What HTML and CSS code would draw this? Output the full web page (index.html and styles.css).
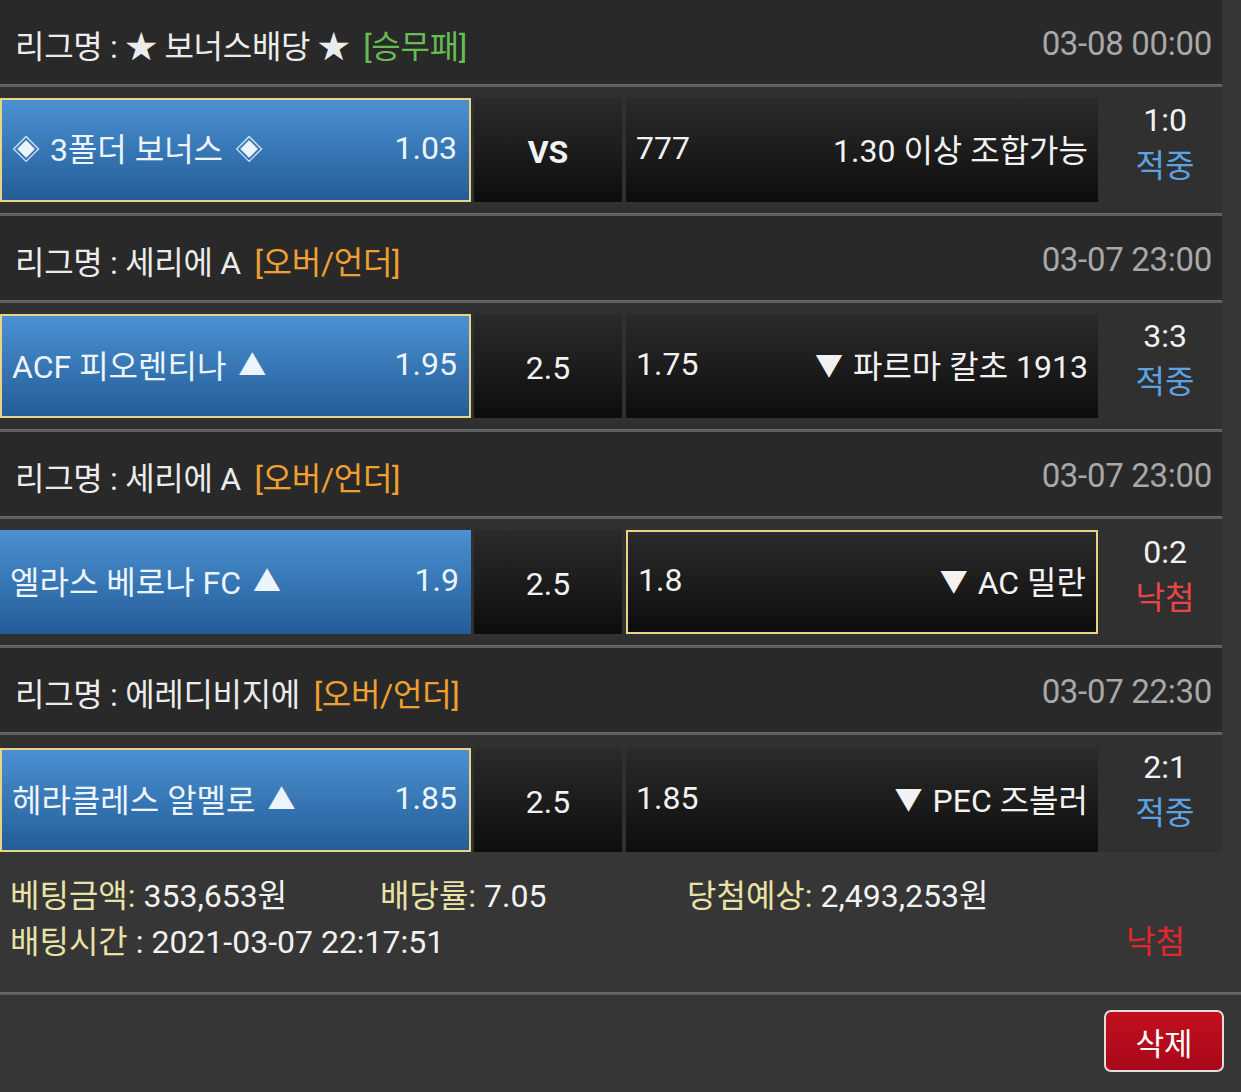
FILE: index.html
```html
<!DOCTYPE html>
<html lang="ko">
<head>
<meta charset="utf-8">
<title>배팅내역</title>
<link rel="stylesheet" href="styles.css">
</head>
<body>
<div class="slip">
  <div class="games">
    <div class="league">
      <span class="league-name">리그명 : ★ 보너스배당 ★ <span class="type green">[승무패]</span></span>
      <span class="date">03-08 00:00</span>
    </div>
    <div class="sep"></div>
    <div class="match">
      <div class="cell home selected"><span><span class="sym first">◈</span> 3폴더 보너스 <span class="sym">◈</span></span><span>1.03</span></div>
      <div class="cell mid bold">VS</div>
      <div class="cell away"><span>777</span><span>1.30 이상 조합가능</span></div>
      <div class="result"><span>1:0</span><span class="hit">적중</span></div>
    </div>
    <div class="sep"></div>

    <div class="league">
      <span class="league-name">리그명 : 세리에 A <span class="type orange">[오버/언더]</span></span>
      <span class="date">03-07 23:00</span>
    </div>
    <div class="sep"></div>
    <div class="match">
      <div class="cell home selected"><span>ACF 피오렌티나 <span class="sym">▲</span></span><span>1.95</span></div>
      <div class="cell mid">2.5</div>
      <div class="cell away"><span>1.75</span><span><span class="sym first">▼</span> 파르마 칼초 1913</span></div>
      <div class="result"><span>3:3</span><span class="hit">적중</span></div>
    </div>
    <div class="sep"></div>

    <div class="league">
      <span class="league-name">리그명 : 세리에 A <span class="type orange">[오버/언더]</span></span>
      <span class="date">03-07 23:00</span>
    </div>
    <div class="sep"></div>
    <div class="match">
      <div class="cell home"><span>엘라스 베로나 FC <span class="sym">▲</span></span><span>1.9</span></div>
      <div class="cell mid">2.5</div>
      <div class="cell away selected"><span>1.8</span><span><span class="sym first">▼</span> AC 밀란</span></div>
      <div class="result"><span>0:2</span><span class="miss">낙첨</span></div>
    </div>
    <div class="sep"></div>

    <div class="league">
      <span class="league-name">리그명 : 에레디비지에 <span class="type orange">[오버/언더]</span></span>
      <span class="date">03-07 22:30</span>
    </div>
    <div class="sep"></div>
    <div class="match last">
      <div class="cell home selected"><span>헤라클레스 알멜로 <span class="sym">▲</span></span><span>1.85</span></div>
      <div class="cell mid">2.5</div>
      <div class="cell away"><span>1.85</span><span><span class="sym first">▼</span> PEC 즈볼러</span></div>
      <div class="result"><span>2:1</span><span class="hit">적중</span></div>
    </div>
  </div>

  <div class="summary">
    <div class="sum-line">
      <span class="item w1"><span class="label">베팅금액:</span> 353,653원</span>
      <span class="item w2"><span class="label">배당률:</span> 7.05</span>
      <span class="item"><span class="label">당첨예상:</span> 2,493,253원</span>
    </div>
    <div class="sum-line">
      <span class="item"><span class="label">배팅시간</span> : 2021-03-07 22:17:51</span>
      <span class="status">낙첨</span>
    </div>
  </div>
  <div class="sep full"></div>
  <div class="actions">
    <button class="btn-del" type="button">삭제</button>
  </div>
</div>
</body>
</html>
```

FILE: styles.css
```css
html, body {
  margin: 0;
  padding: 0;
}
body {
  background: #363636;
  font-family: Roboto, "Noto Sans CJK KR", sans-serif;
  color: #f2f2f2;
  font-size: 32px;
  width: 1241px;
  height: 1092px;
  overflow: hidden;
}
.games {
  width: 1222px;
  background: #323232;
}
.league {
  height: 84px;
  box-sizing: border-box;
  background: #292929;
  display: flex;
  align-items: center;
  justify-content: space-between;
  padding: 3px 10px 0 15px;
  letter-spacing: -0.3px;
}
.league-name {
  color: #ececec;
}
.type {
  margin-left: 6px;
}
.green { color: #66bb55; }
.orange { color: #f0a030; }
.date {
  color: #a8a8a8;
  font-size: 33px;
}
.sep {
  height: 3px;
  background: #5e5e5e;
  border-top: 1px solid #6a6a6a;
  box-sizing: border-box;
}
.sep.full {
  width: 1241px;
}
.match {
  height: 126px;
  display: flex;
  align-items: center;
  padding: 0;
  background: #303030;
}
.match.last {
  height: 117px;
  align-items: flex-end;
}
.cell {
  height: 104px;
  box-sizing: border-box;
  display: flex;
  align-items: center;
  justify-content: space-between;
  background: linear-gradient(#2b2b2b, #0d0d0d);
}
.sym {
  font-size: 28px;
  position: relative;
  top: -2px;
  margin-left: 4px;
}
.sym.first {
  margin-left: 0;
  margin-right: 2px;
}
.home {
  width: 471px;
  padding: 0 12px 5px 10px;
  background: linear-gradient(#4b91d2, #235d98);
  color: #eef4fb;
}
.mid {
  width: 148px;
  margin-left: 3px;
  justify-content: center;
  padding-top: 4px;
}
.bold {
  font-weight: 700;
}
.away {
  width: 472px;
  margin-left: 4px;
  padding: 0 10px 5px 10px;
}
.selected {
  border: 2px solid #e9d385;
}
.result {
  flex: 1;
  display: flex;
  flex-direction: column;
  align-items: center;
  line-height: 46px;
  align-self: center;
  padding: 0 0 14px 10px;
}
.match.last .result {
  align-self: flex-end;
  padding-bottom: 16px;
}
.hit { color: #5ca3e3; }
.miss { color: #e8454a; }
.summary {
  height: 140px;
  padding: 18px 10px 0 10px;
  box-sizing: border-box;
}
.sum-line {
  display: flex;
  height: 46px;
  align-items: center;
}
.item {
  white-space: nowrap;
}
.w1 { width: 370px; }
.w2 { width: 307px; }
.label { color: #e8e2a6; }
.status {
  margin-left: auto;
  margin-right: 46px;
  color: #e3262a;
}
.actions {
  display: flex;
  justify-content: flex-end;
  padding: 15px 17px 0 0;
}
.btn-del {
  width: 120px;
  height: 62px;
  border: 2px solid #e4dcdc;
  border-radius: 7px;
  background: linear-gradient(#c20f1f, #a8081a);
  color: #fff;
  font-family: Roboto, "Noto Sans CJK KR", sans-serif;
  font-size: 31px;
  padding: 0;
}
```
